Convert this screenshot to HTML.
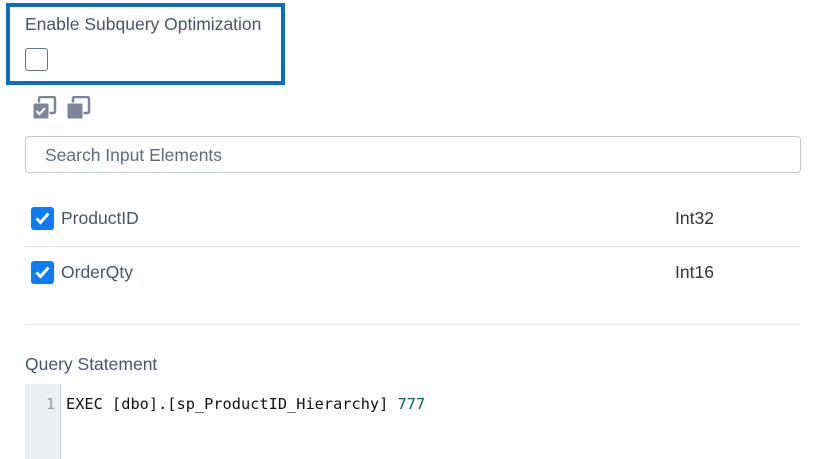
<!DOCTYPE html>
<html><head><style>
body{margin:0;width:821px;height:459px;background:#fff;font-family:"Liberation Sans",sans-serif;color:#4a5468;position:relative;overflow:hidden}
.a{position:absolute}
.t{font-size:17.5px}
.cb{position:absolute;width:23px;height:23px;border-radius:3px;background:#0d7cf2}
</style></head><body>
<div class="a" style="left:6px;top:3px;width:271px;height:74px;border:4px solid #0a6fc2"></div>
<div class="a t" style="left:25px;top:14px;">Enable Subquery Optimization</div>
<div class="a" style="left:25px;top:48px;width:21px;height:21px;border:1.5px solid #6b7280;border-radius:3px"></div>
<svg class="a" style="left:32px;top:96px" width="60" height="26" viewBox="0 0 60 26">
<rect x="7" y="1" width="16" height="16" rx="1.5" fill="none" stroke="#7c8698" stroke-width="2.5"/>
<rect x="1" y="7" width="16" height="16" rx="1.5" fill="#7c8698" stroke="#fff" stroke-width="1"/>
<path d="M4.5 15l3 3 5.5-6" fill="none" stroke="#fff" stroke-width="2"/>
<rect x="41" y="1" width="16" height="16" rx="1.5" fill="none" stroke="#7c8698" stroke-width="2.5"/>
<rect x="35" y="7" width="16" height="16" rx="1.5" fill="#7c8698" stroke="#fff" stroke-width="1"/>
</svg>
<div class="a" style="left:25px;top:136px;width:774px;height:35px;border:1px solid #c4c9d2;border-radius:4px"></div>
<div class="a t" style="left:45px;top:145px;color:#606a7c">Search Input Elements</div>
<div class="cb" style="left:31px;top:207px"></div>
<svg class="a" style="left:31px;top:207px" width="23" height="23"><path d="M5.5 11.5l4 4 8-9" fill="none" stroke="#fff" stroke-width="3"/></svg>
<div class="a t" style="left:61px;top:208px">ProductID</div>
<div class="a t" style="left:675px;top:208px;color:#333">Int32</div>
<div class="a" style="left:25px;top:246px;width:775px;height:1px;background:#e1e4ea"></div>
<div class="cb" style="left:31px;top:261px"></div>
<svg class="a" style="left:31px;top:261px" width="23" height="23"><path d="M5.5 11.5l4 4 8-9" fill="none" stroke="#fff" stroke-width="3"/></svg>
<div class="a t" style="left:61px;top:262px">OrderQty</div>
<div class="a t" style="left:675px;top:262px;color:#333">Int16</div>
<div class="a" style="left:25px;top:324px;width:775px;height:1px;background:#e1e4ea"></div>
<div class="a t" style="left:25px;top:354px">Query Statement</div>
<div class="a" style="left:25px;top:384px;width:35px;height:75px;background:#edf0f3;border-right:1px solid #c8ccd3"></div>
<div class="a" style="left:46px;top:395px;font-family:'DejaVu Sans Mono',monospace;font-size:15.3px;color:#999">1</div>
<div class="a" style="left:66px;top:395px;font-family:'DejaVu Sans Mono',monospace;font-size:15.3px;color:#111">EXEC [dbo].[sp_ProductID_Hierarchy] <span style="color:#116644">777</span></div>
</body></html>
